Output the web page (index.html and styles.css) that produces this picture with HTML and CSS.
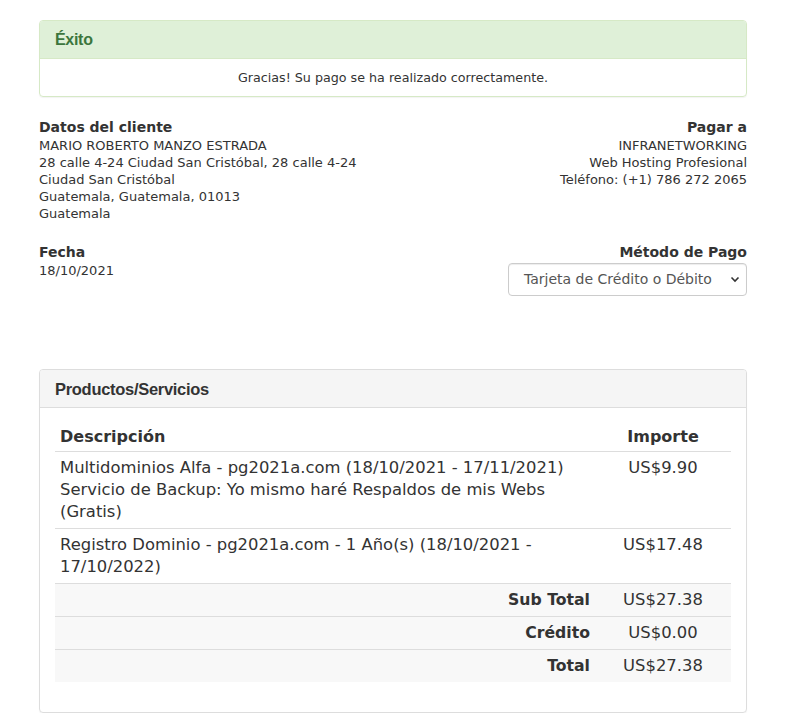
FILE: index.html
```html
<!DOCTYPE html>
<html lang="es">
<head>
<meta charset="utf-8">
<title>Factura</title>
<link rel="stylesheet" href="styles.css">
</head>
<body>
<div class="page">
  <div class="alert">
    <div class="alert-head">Éxito</div>
    <div class="alert-body">Gracias! Su pago se ha realizado correctamente.</div>
  </div>

  <div class="info-row">
    <div class="info-col">
      <div class="label">Datos del cliente</div>
      <div class="lines">
        MARIO ROBERTO MANZO ESTRADA<br>
        28 calle 4-24 Ciudad San Cristóbal, 28 calle 4-24<br>
        Ciudad San Cristóbal<br>
        Guatemala, Guatemala, 01013<br>
        Guatemala
      </div>
    </div>
    <div class="info-col right">
      <div class="label">Pagar a</div>
      <div class="lines">
        INFRANETWORKING<br>
        Web Hosting Profesional<br>
        Teléfono: (+1) 786 272 2065
      </div>
    </div>
  </div>

  <div class="info-row second">
    <div class="info-col">
      <div class="label">Fecha</div>
      <div class="lines">18/10/2021</div>
    </div>
    <div class="info-col right">
      <div class="label">Método de Pago</div>
      <div class="select">
        <span>Tarjeta de Crédito o Débito</span>
        <svg class="chev" width="10" height="7" viewBox="0 0 10 7"><path d="M1.5 1.5 L5 5 L8.5 1.5" fill="none" stroke="#333" stroke-width="1.6"/></svg>
      </div>
    </div>
  </div>

  <div class="panel">
    <div class="panel-head">Productos/Servicios</div>
    <div class="panel-body">
      <table class="items">
        <thead>
          <tr><th class="desc">Descripción</th><th class="amt">Importe</th></tr>
        </thead>
        <tbody>
          <tr>
            <td class="desc">Multidominios Alfa - pg2021a.com (18/10/2021 - 17/11/2021)<br>Servicio de Backup: Yo mismo haré Respaldos de mis Webs (Gratis)</td>
            <td class="amt">US$9.90</td>
          </tr>
          <tr>
            <td class="desc">Registro Dominio - pg2021a.com - 1 Año(s) (18/10/2021 - 17/10/2022)</td>
            <td class="amt">US$17.48</td>
          </tr>
          <tr class="total">
            <td class="desc lbl">Sub Total</td>
            <td class="amt">US$27.38</td>
          </tr>
          <tr class="total">
            <td class="desc lbl">Crédito</td>
            <td class="amt">US$0.00</td>
          </tr>
          <tr class="total">
            <td class="desc lbl">Total</td>
            <td class="amt">US$27.38</td>
          </tr>
        </tbody>
      </table>
    </div>
  </div>
</div>
</body>
</html>
```

FILE: styles.css
```css
* { box-sizing: border-box; }
body {
  margin: 0;
  background: #fff;
  color: #333;
  font-family: "DejaVu Sans", Verdana, sans-serif;
  font-size: 13px;
}
.page {
  width: 708px;
  margin: 20px 0 0 39px;
}
.alert {
  border: 1px solid #d6e9c6;
  border-radius: 4px;
  box-shadow: 0 1px 1px rgba(0,0,0,0.05);
}
.alert-head {
  background: #dff0d8;
  color: #3c763d;
  height: 38px;
  padding: 9px 15px;
  font-family: "Liberation Sans", Arial, sans-serif;
  font-weight: bold;
  font-size: 16px;
  letter-spacing: -0.3px;
  line-height: 20px;
  border-bottom: 1px solid #d6e9c6;
  border-radius: 3px 3px 0 0;
}
.alert-body {
  height: 37px;
  text-align: center;
  line-height: 37px;
  font-size: 12.7px;
}
.info-row {
  display: flex;
  justify-content: space-between;
  margin-top: 21px;
  line-height: 17px;
}
.info-col.right {
  text-align: right;
  display: flex;
  flex-direction: column;
  align-items: flex-end;
}
.label {
  font-weight: bold;
  font-size: 14px;
  line-height: 19px;
}
.select {
  margin-top: 1px;
  width: 239px;
  height: 33px;
  border: 1px solid #ccc;
  border-radius: 4px;
  display: flex;
  align-items: center;
  justify-content: space-between;
  padding: 0 6px 0 15px;
  color: #555;
  font-size: 14px;
  box-shadow: inset 0 1px 1px rgba(0,0,0,0.075);
}
.panel {
  margin-top: 73px;
  border: 1px solid #ddd;
  border-radius: 4px;
  box-shadow: 0 1px 1px rgba(0,0,0,0.05);
}
.panel-head {
  background: #f5f5f5;
  border-bottom: 1px solid #ddd;
  height: 38px;
  padding: 9px 15px;
  font-family: "Liberation Sans", Arial, sans-serif;
  font-weight: bold;
  font-size: 16.5px;
  letter-spacing: -0.3px;
  line-height: 20px;
  border-radius: 3px 3px 0 0;
}
.panel-body { padding: 15px; }
.items {
  width: 100%;
  border-collapse: collapse;
  font-size: 16.4px;
  line-height: 22px;
  margin-bottom: 15px;
}
.items th, .items td { padding: 5px; vertical-align: top; }
.items th {
  text-align: left;
  font-weight: bold;
  font-size: 16px;
  line-height: 18px;
  border-bottom: 1px solid #ddd;
}
.items td { border-top: 1px solid #ddd; }
.items tbody tr:first-child td { border-top: 0; }
.items .amt { width: 136px; text-align: center; }
.items .total { background: #f8f8f8; }
.items .lbl { text-align: right; font-weight: bold; font-size: 15.7px; }
```
